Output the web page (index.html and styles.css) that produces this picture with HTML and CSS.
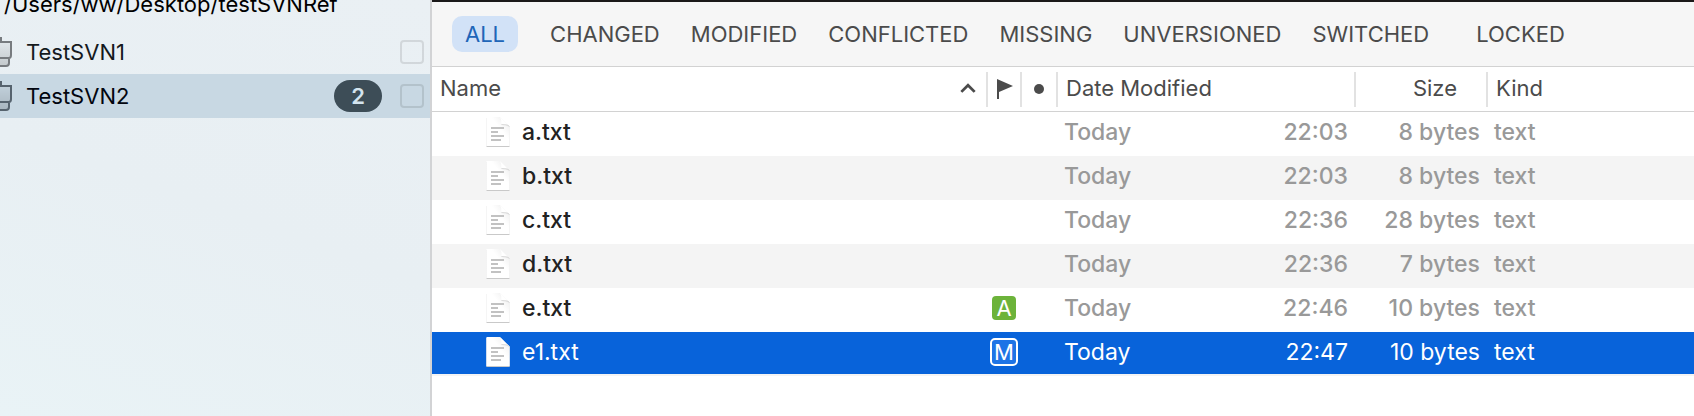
FILE: index.html
```html
<!DOCTYPE html>
<html lang="en">
<head>
<meta charset="utf-8">
<title>Working copies</title>
<link rel="stylesheet" href="styles.css">
</head>
<body>
<svg class="defs" aria-hidden="true">
  <defs>
    <linearGradient id="paper" x1="0" y1="1" x2="1" y2="0">
      <stop offset="0.6" stop-color="#ffffff"/>
      <stop offset="1" stop-color="#e9e9e9"/>
    </linearGradient>
    <linearGradient id="drive" x1="0" y1="0" x2="0" y2="1">
      <stop offset="0" stop-color="#000" stop-opacity="0.04"/>
      <stop offset="1" stop-color="#000" stop-opacity="0.16"/>
    </linearGradient>
    <symbol id="file" viewBox="0 0 24 30">
      <path d="M.5 0H14L23.500 9.500V29.500H.5Z" fill="url(#paper)"/>
      <path d="M14 0Q16 3 15.500 7.500Q20 7 23.500 9.500Z" fill="#fff"/>
      <path d="M15.500 7.500Q20 7 23.500 9.500L22 8Z" fill="#d0d0d0" stroke="#dcdcdc" stroke-width=".8"/>
      <path d="M.5 29.500H23.500" stroke="#c9c9c9"/>
      <path d="M.5 1V29M23.500 10V29" stroke="#f0f0f0" stroke-width=".7"/>
      <path d="M5 11H18M5 15H12M5 19H18M5 23H15" stroke="#c2c2c2" stroke-width="1.800"/>
    </symbol>
    <symbol id="repo" viewBox="0 0 12 30">
      <path d="M-8 5H11V18Q11 21 9 21V26Q9 29 6 29H-8Z" fill="url(#drive)"/>
      <path d="M0 1H1V5H11V18Q11 21 9 21H0M9 21V26Q9 29 6 29H0" fill="none" stroke="currentColor" stroke-width="2"/>
    </symbol>
  </defs>
</svg>
<div class="app">
  <aside class="sidebar">
    <h1 class="path">/Users/ww/Desktop/testSVNRef</h1>
    <ul class="repos">
      <li class="repo">
        <svg class="repo-icon" aria-hidden="true"><use href="#repo"/></svg>
        <label class="repo-name" for="r1">TestSVN1</label>
        <input class="check" type="checkbox" id="r1">
      </li>
      <li class="repo repo-active">
        <svg class="repo-icon" aria-hidden="true"><use href="#repo"/></svg>
        <label class="repo-name" for="r2">TestSVN2</label>
        <span class="count">2</span>
        <input class="check" type="checkbox" id="r2">
      </li>
    </ul>
  </aside>
  <main class="main">
    <nav class="filters">
      <button class="filter filter-on" type="button">ALL</button>
      <button class="filter" type="button">CHANGED</button>
      <button class="filter" type="button">MODIFIED</button>
      <button class="filter" type="button">CONFLICTED</button>
      <button class="filter" type="button">MISSING</button>
      <button class="filter" type="button">UNVERSIONED</button>
      <button class="filter" type="button">SWITCHED</button>
      <button class="filter filter-last" type="button">LOCKED</button>
    </nav>
    <table class="files">
      <colgroup>
        <col><col class="c-flag"><col class="c-dot"><col class="c-date"><col class="c-size"><col class="c-kind">
      </colgroup>
      <thead>
        <tr>
          <th><div class="head">Name
            <svg class="sort" viewBox="0 0 14 9" aria-hidden="true"><path d="M1 8L7 2L13 8" fill="none" stroke="currentColor" stroke-width="2.500"/></svg></div></th>
          <th><div class="head head-icon"><svg class="flag" viewBox="0 0 16 20" aria-label="Status"><path d="M0 0L16 7L2 13V20H0Z" fill="currentColor"/></svg></div></th>
          <th><div class="head head-icon"><span class="dot"></span></div></th>
          <th><div class="head">Date Modified</div></th>
          <th><div class="head head-size">Size</div></th>
          <th><div class="head head-end">Kind</div></th>
        </tr>
      </thead>
      <tbody>
        <tr><td><div class="file"><svg class="file-icon" aria-hidden="true"><use href="#file"/></svg>a.txt</div></td><td></td><td></td><td><div class="date"><span>Today</span><span>22:03</span></div></td><td class="size">8 bytes</td><td class="kind">text</td></tr>
        <tr><td><div class="file"><svg class="file-icon" aria-hidden="true"><use href="#file"/></svg>b.txt</div></td><td></td><td></td><td><div class="date"><span>Today</span><span>22:03</span></div></td><td class="size">8 bytes</td><td class="kind">text</td></tr>
        <tr><td><div class="file"><svg class="file-icon" aria-hidden="true"><use href="#file"/></svg>c.txt</div></td><td></td><td></td><td><div class="date"><span>Today</span><span>22:36</span></div></td><td class="size">28 bytes</td><td class="kind">text</td></tr>
        <tr><td><div class="file"><svg class="file-icon" aria-hidden="true"><use href="#file"/></svg>d.txt</div></td><td></td><td></td><td><div class="date"><span>Today</span><span>22:36</span></div></td><td class="size">7 bytes</td><td class="kind">text</td></tr>
        <tr><td><div class="file"><svg class="file-icon" aria-hidden="true"><use href="#file"/></svg>e.txt</div></td><td class="flag-cell"><span class="status added">A</span></td><td></td><td><div class="date"><span>Today</span><span>22:46</span></div></td><td class="size">10 bytes</td><td class="kind">text</td></tr>
        <tr class="selected"><td><div class="file"><svg class="file-icon" aria-hidden="true"><use href="#file"/></svg>e1.txt</div></td><td class="flag-cell"><span class="status modified">M</span></td><td></td><td><div class="date"><span>Today</span><span>22:47</span></div></td><td class="size">10 bytes</td><td class="kind">text</td></tr>
      </tbody>
    </table>
  </main>
</div>
</body>
</html>
```
FILE: styles.css
```css
* { box-sizing: border-box; }

body {
  margin: 0;
  font-family: Inter, "Liberation Sans", sans-serif;
  font-size: 22px;
  color: #4b4b4b;
  background: #fff;
}

.defs { position: absolute; width: 0; height: 0; }

.app {
  display: grid;
  grid-template-columns: 432px 1fr;
  min-height: 100vh;
}

/* Sidebar */
.sidebar {
  overflow: hidden;
  border-right: 2px solid #d2d3d5;
  background: linear-gradient(20deg, #e9f3f6 0%, #e8eff3 50%, #eaf0f4 100%);
}

.path {
  margin: -12px 0 0;
  padding: 0 4px 10px;
  font-size: 22px;
  font-weight: 400;
  line-height: 32px;
  white-space: nowrap;
  color: #000;
}

.repos { margin: 0; padding: 0; list-style: none; }

.repo {
  display: flex;
  align-items: center;
  height: 44px;
  padding-right: 6px;
  color: #777b7f;
}

.repo-active { background: #c8d8e3; color: #56636e; }

.repo-icon { width: 12px; height: 30px; margin-right: 14px; }

.repo-name {
  flex: 1;
  font-weight: 400;
  color: #14191d;
}

.repo-active .repo-name { color: #02060f; }

.count {
  width: 48px;
  margin-right: 18px;
  border-radius: 16px;
  background: #3d4d57;
  color: #d3e4ef;
  font-weight: 600;
  line-height: 32px;
  text-align: center;
}

.check {
  appearance: none;
  width: 24px;
  height: 24px;
  margin: 0;
  border: 2px solid rgba(0, 0, 0, 0.1);
  border-radius: 4px;
}

/* Filter bar */
.main { min-width: 0; }

.filters {
  display: flex;
  align-items: center;
  gap: 5px;
  height: 67px;
  padding: 0 20px;
  border-top: 2px solid #1b1919;
  border-bottom: 1px solid #d2d2d2;
  background: #f6f6f6;
}

.filter {
  height: 36px;
  padding: 0 13px;
  border: 0;
  border-radius: 10px;
  background: none;
  color: #4b4b4b;
  font: inherit;
}

.filter-on {
  margin-right: 14px;
  background: #d2e2f7;
  color: #2065b8;
}

.filter-last { margin-left: 16px; }

/* File table */
.files {
  width: 100%;
  table-layout: fixed;
  border-collapse: separate;
  border-spacing: 0;
}

.c-flag { width: 34px; }
.c-dot { width: 36px; }
.c-date { width: 298px; }
.c-size { width: 132px; }
.c-kind { width: 206px; }

th {
  height: 45px;
  padding: 0;
  border-bottom: 1px solid #d2d2d2;
  font-weight: 400;
}

.head {
  display: flex;
  align-items: center;
  justify-content: space-between;
  height: 35px;
  padding: 0 8px 2px;
  border-right: 2px solid #e2e2e2;
}

.head-icon { justify-content: center; padding: 0; }
.head-size { justify-content: flex-end; padding-right: 29px; }
.head-end { border-right: 0; }

.sort { width: 16px; height: 10px; margin-right: 2px; }
.flag { width: 16px; height: 20px; margin-left: 2px; }

.dot {
  width: 10px;
  height: 10px;
  border-radius: 50%;
  background: #4b4b4b;
}

td {
  height: 44px;
  padding: 0 0 4px;
  font-size: 23px;
  font-weight: 450;
  line-height: 28px;
  color: #999;
  white-space: nowrap;
}

tbody tr:nth-child(even) td { background: #f4f4f4; }

.file {
  display: flex;
  align-items: center;
  gap: 12px;
  padding-left: 54px;
  color: #222;
}

.file-icon { width: 24px; height: 30px; }

.date {
  display: flex;
  justify-content: space-between;
  padding: 0 8px 0 6px;
}

.size { padding-right: 8px; text-align: right; }
.kind { padding-left: 6px; }

.flag-cell { padding-right: 2px; }

.status {
  display: block;
  width: 24px;
  margin: 0 auto;
  border-radius: 4px;
  color: #fff;
  font-size: 22px;
  font-weight: 400;
  line-height: 24px;
  text-align: center;
}

.added { background: #6cb33a; }

.modified {
  width: 28px;
  border: 2px solid #fff;
  border-radius: 5px;
  background: #1e74e6;
}

tbody tr.selected td {
  padding-bottom: 2px;
  border-bottom: 2px solid #f4f4f4;
  background: #0863da;
  color: #fff;
  font-weight: 400;
}

.selected .file { color: #fff; }
```
